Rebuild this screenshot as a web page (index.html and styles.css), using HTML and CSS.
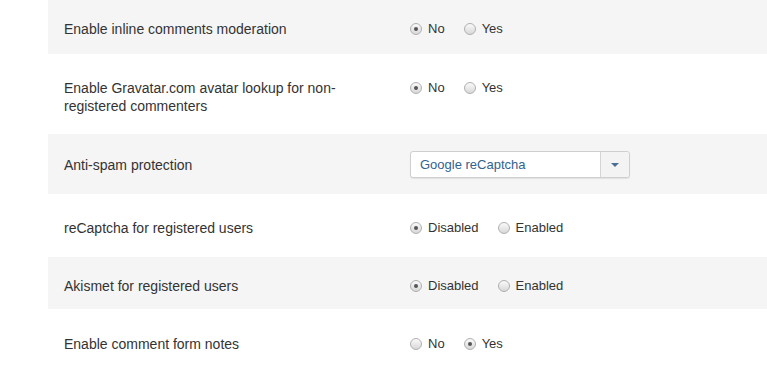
FILE: index.html
```html
<!DOCTYPE html>
<html lang="en">
<head>
    <meta charset="UTF-8">
    <title>Comment Settings</title>
    <link rel="stylesheet" href="styles.css">
</head>
<body>
    <div class="settings">
        <div class="row shade r1">
            <div class="label">Enable inline comments moderation</div>
            <div class="control">
                <span class="opt"><span class="radio checked"></span>No</span>
                <span class="opt"><span class="radio"></span>Yes</span>
            </div>
        </div>
        <div class="row r2">
            <div class="label">Enable Gravatar.com avatar lookup for non-registered commenters</div>
            <div class="control">
                <span class="opt"><span class="radio checked"></span>No</span>
                <span class="opt"><span class="radio"></span>Yes</span>
            </div>
        </div>
        <div class="row shade r3">
            <div class="label">Anti-spam protection</div>
            <div class="control">
                <div class="select">
                    <span class="select-text">Google reCaptcha</span>
                    <span class="select-btn"><span class="caret"></span></span>
                </div>
            </div>
        </div>
        <div class="row r4">
            <div class="label">reCaptcha for registered users</div>
            <div class="control">
                <span class="opt"><span class="radio checked"></span>Disabled</span>
                <span class="opt"><span class="radio"></span>Enabled</span>
            </div>
        </div>
        <div class="row shade r5">
            <div class="label">Akismet for registered users</div>
            <div class="control">
                <span class="opt"><span class="radio checked"></span>Disabled</span>
                <span class="opt"><span class="radio"></span>Enabled</span>
            </div>
        </div>
        <div class="row r6">
            <div class="label">Enable comment form notes</div>
            <div class="control">
                <span class="opt"><span class="radio"></span>No</span>
                <span class="opt"><span class="radio checked"></span>Yes</span>
            </div>
        </div>
    </div>
</body>
</html>
```

FILE: styles.css
```css
body {
    margin: 0;
    font-family: "Liberation Sans", Arial, sans-serif;
    font-size: 14px;
    color: #333;
    background: #fff;
}
.settings {
    margin-left: 48px;
}
.row {
    display: flex;
    align-items: flex-start;
    padding: 20px 16px;
    line-height: 20px;
}
.shade {
    background-color: #f5f5f5;
}
.r1 { padding-top: 19px; padding-bottom: 15px; }
.r2 { padding-top: 25px; padding-bottom: 19px; line-height: 18px; }
.r3 { padding-top: 17px; padding-bottom: 16px; align-items: center; }
.r4 { padding-top: 24px; padding-bottom: 19px; }
.r5 { padding-top: 19px; padding-bottom: 13px; }
.r6 { padding-top: 25px; padding-bottom: 20px; }
.label {
    width: 280px;
    flex-shrink: 0;
    margin-right: 66px;
}
.r2 .control {
    margin-top: -1px;
    line-height: 20px;
}
.control {
    display: flex;
    align-items: center;
    font-size: 13px;
}
.opt {
    display: flex;
    align-items: center;
    margin-right: 19px;
}
.radio {
    width: 10px;
    height: 10px;
    border: 1px solid #b0b0b0;
    border-radius: 50%;
    background: linear-gradient(#fafafa, #d8d8d8);
    margin-right: 6px;
    position: relative;
}
.radio.checked::after {
    content: "";
    position: absolute;
    left: 3px;
    top: 3px;
    width: 4px;
    height: 4px;
    border-radius: 50%;
    background: #555;
}
.select {
    display: flex;
    width: 218px;
    height: 25px;
    border: 1px solid #cfcfcf;
    border-radius: 3px;
    background: #fff;
    box-shadow: 0 1px 1px rgba(0,0,0,0.08);
}
.select-text {
    flex: 1;
    padding-left: 9px;
    line-height: 25px;
    color: #33628f;
}
.select-btn {
    width: 28px;
    border-left: 1px solid #d5d5d5;
    background: #f3f3f3;
    display: flex;
    align-items: center;
    justify-content: center;
    border-radius: 0 3px 3px 0;
}
.caret {
    width: 0;
    height: 0;
    border-left: 4px solid transparent;
    border-right: 4px solid transparent;
    border-top: 4px solid #4a6f95;
}
```
